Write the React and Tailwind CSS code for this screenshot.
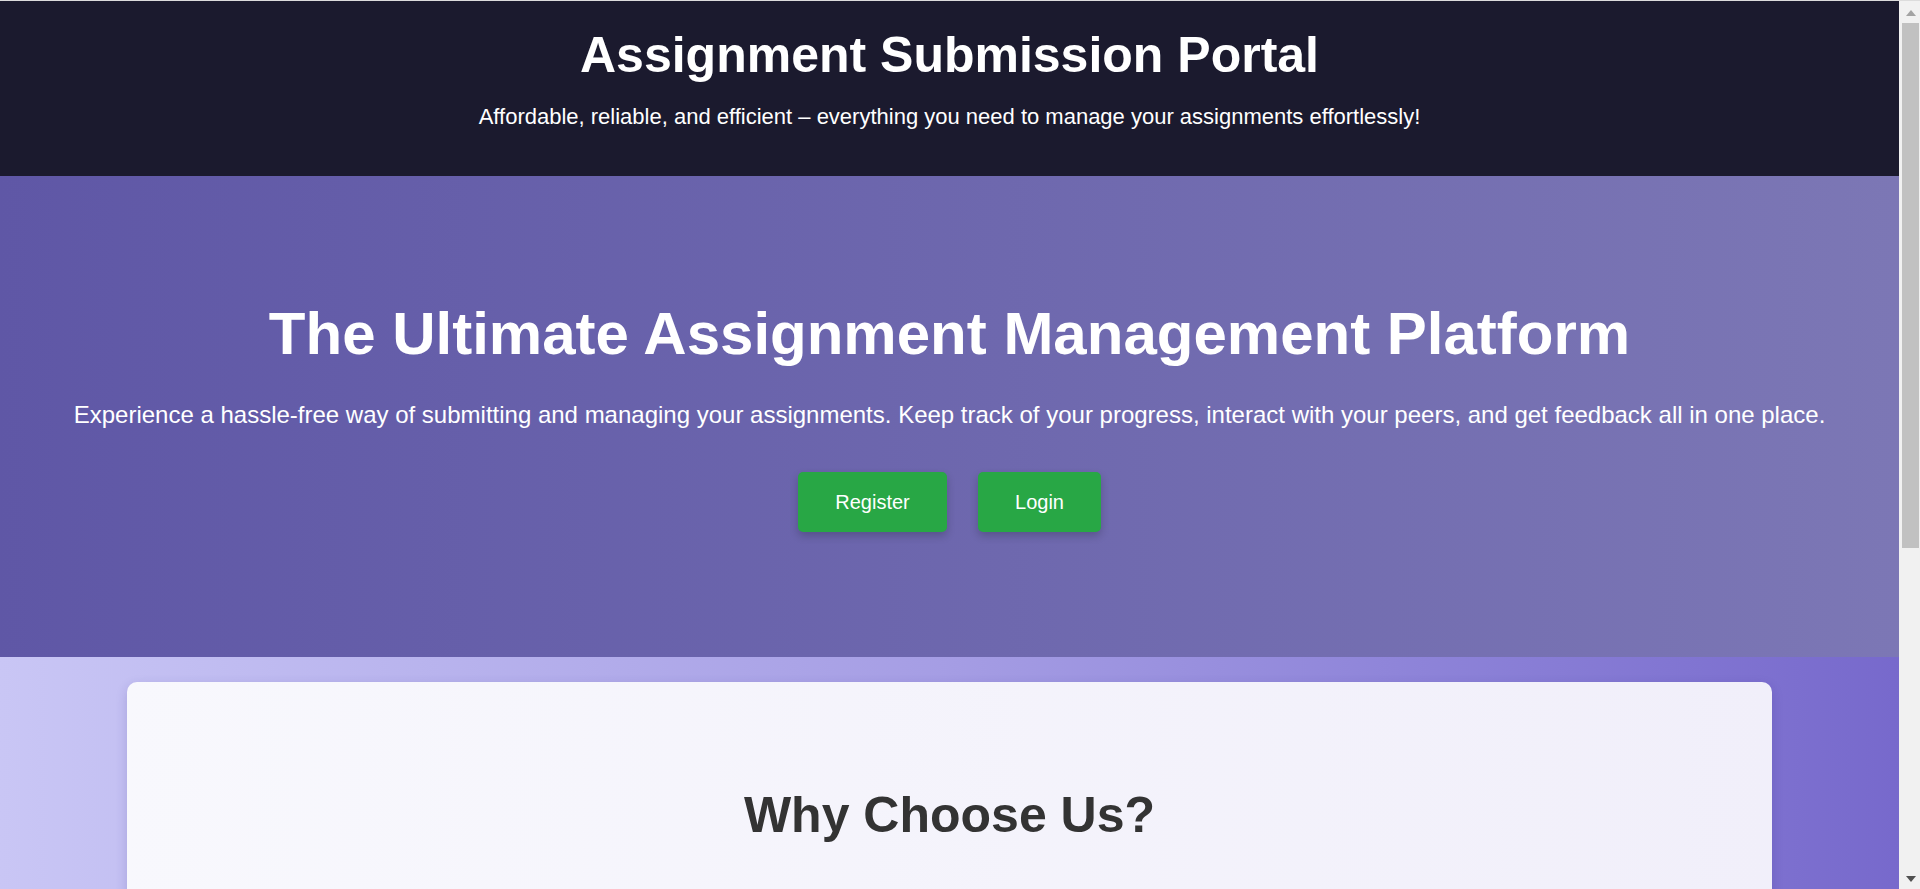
import React from "react";

const features = [
  {
    title: "Easy Submissions",
    text: "Upload your assignments in a few clicks and get instant confirmation that your work has been received.",
  },
  {
    title: "Track Progress",
    text: "See deadlines, grades and feedback for every course in a single, clear dashboard.",
  },
  {
    title: "Peer Interaction",
    text: "Discuss topics with classmates, share ideas and learn together in a friendly environment.",
  },
];

// the window scrollbar drawn on the right of the page
const ScrollBar = () => (
  <div className="w-[21px] shrink-0 bg-[#f1f1f1] flex flex-col items-center pl-[2px]">
    <svg width="10" height="6" viewBox="0 0 10 6" className="mt-[9px]">
      <path d="M5 0 L10 6 L0 6 Z" fill="#a3a3a3" />
    </svg>
    <div className="mt-[7px] w-[17px] h-[525px] bg-[#c1c1c1]" />
    <div className="flex-1" />
    <svg width="10" height="6" viewBox="0 0 10 6" className="mb-[7px]">
      <path d="M0 0 L10 0 L5 6 Z" fill="#505050" />
    </svg>
  </div>
);

const App = () => {
  return (
    <div className="h-screen flex border-t border-[#dcdcdc] font-['Liberation_Sans',Arial,sans-serif]">
      <div className="flex-1 overflow-y-auto [scrollbar-width:none]">
        {/* Header */}
        <header className="bg-[#1b1a2e] text-white text-center pt-[25px] pb-[47px]">
          <h1 className="text-[50px] font-bold leading-[58px]">Assignment Submission Portal</h1>
          <p className="mt-[20px] text-[22px] leading-[25px]">
            Affordable, reliable, and efficient – everything you need to manage your assignments effortlessly!
          </p>
        </header>

        {/* Hero */}
        <section className="bg-gradient-to-r from-[#5f57a6] to-[#7c77b5] text-white text-center pt-[123px] pb-[125px]">
          <h2 className="text-[60px] font-bold leading-[69px]">The Ultimate Assignment Management Platform</h2>
          <p className="mt-[33px] text-[24px] leading-[28px]">
            Experience a hassle-free way of submitting and managing your assignments. Keep track of your progress, interact with your peers, and get feedback all in one place.
          </p>
          <div className="mt-[43px] flex justify-center gap-[31px]">
            <button className="h-[60px] w-[149px] bg-[#28a745] text-white text-[20px] rounded-[5px] shadow-[0_4px_8px_rgba(0,0,0,0.2)]">
              Register
            </button>
            <button className="h-[60px] w-[123px] bg-[#28a745] text-white text-[20px] rounded-[5px] shadow-[0_4px_8px_rgba(0,0,0,0.2)]">
              Login
            </button>
          </div>
        </section>

        {/* Why choose us */}
        <section className="bg-gradient-to-r from-[#c9c6f5] via-[#a59de4] to-[#7769cc] pt-[25px] pb-[60px]">
          <div className="mx-auto w-[1645px] rounded-[10px] bg-gradient-to-r from-[#f8f8fd] to-[#f1effa] shadow-[0_4px_12px_rgba(40,30,120,0.18)] pt-[104px] pb-[80px] px-[50px]">
            <h2 className="text-center text-[50px] font-bold leading-[58px] text-[#333]">Why Choose Us?</h2>
            <div className="mt-[50px] grid grid-cols-3 gap-[30px]">
              {features.map((f) => (
                <div key={f.title} className="bg-white rounded-[10px] p-[30px] shadow-[0_2px_8px_rgba(0,0,0,0.08)]">
                  <h3 className="text-[24px] font-bold text-[#5f57a6]">{f.title}</h3>
                  <p className="mt-[12px] text-[18px] text-[#555] leading-[1.5]">{f.text}</p>
                </div>
              ))}
            </div>
          </div>
        </section>

        {/* Footer */}
        <footer className="bg-[#1b1a2e] text-white text-center py-[20px] text-[16px]">
          © 2024 Assignment Submission Portal. All rights reserved.
        </footer>
      </div>
      <ScrollBar />
    </div>
  );
};

export default App;
